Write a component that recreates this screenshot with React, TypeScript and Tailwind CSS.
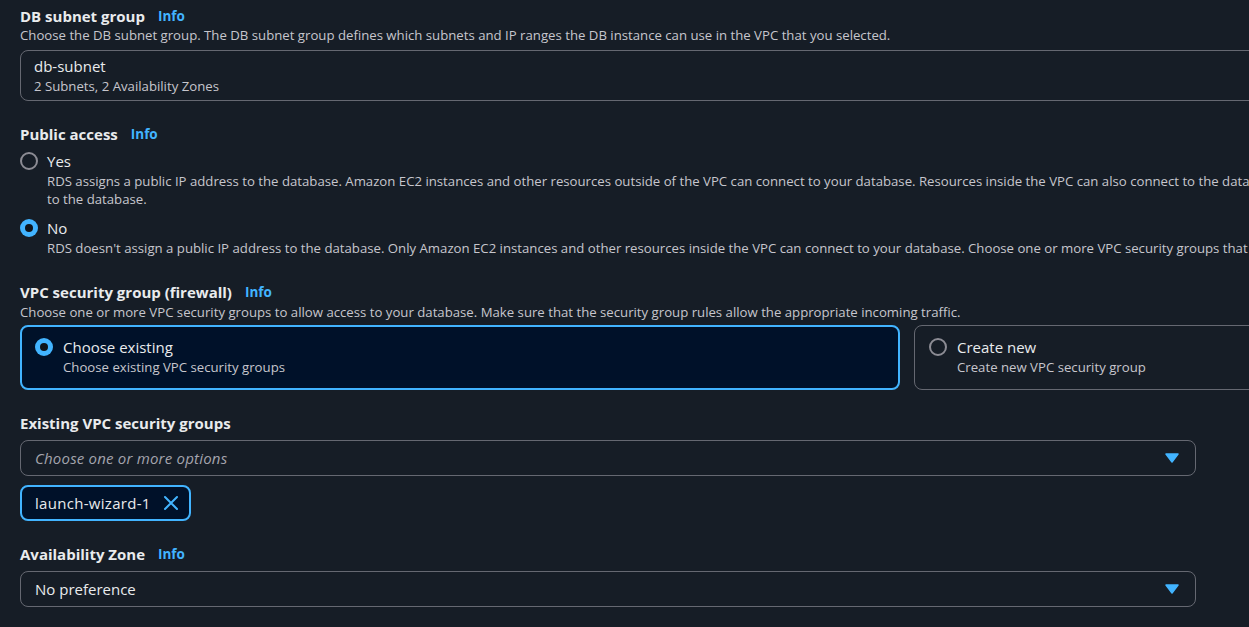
import React from "react";

const font = { fontFamily: '"Open Sans", "Noto Sans", sans-serif' };

function Info() {
  return <span className="ml-[13px] text-[13.5px] font-bold text-[#42b4ff]">Info</span>;
}

function Radio({ checked }: { checked?: boolean }) {
  return checked ? (
    <span className="flex h-[18px] w-[18px] shrink-0 items-center justify-center rounded-full bg-[#42b4ff]">
      <span className="block h-[8px] w-[8px] rounded-full bg-[#0f141a]" />
    </span>
  ) : (
    <span className="block h-[18px] w-[18px] shrink-0 rounded-full border-2 border-[#8c8c94]" />
  );
}

function Caret() {
  return (
    <svg width="14" height="10" viewBox="0 0 14 10">
      <path d="M1 1h12L7 9z" fill="#42b4ff" stroke="#42b4ff" strokeLinejoin="round" strokeWidth="1.5" />
    </svg>
  );
}

export default function App() {
  return (
    <div className="h-[627px] w-[1249px] overflow-hidden bg-[#161d26] text-[#e9ebed]" style={font}>
      <div className="w-[1800px] px-[20px] pt-[6px]">
        {/* DB subnet group */}
        <div className="flex items-center text-[15px] font-bold leading-[20px]">
          DB subnet group <Info />
        </div>
        <p className="text-[13.2px] leading-[18px] text-[#c6c6cd]">
          Choose the DB subnet group. The DB subnet group defines which subnets and IP ranges the DB instance can use in the VPC that you selected.
        </p>
        <div className="mt-[6px] flex h-[51px] flex-col justify-center rounded-[8px] border border-[#656871] px-[13px]">
          <div className="text-[15px] leading-[21px]">db-subnet</div>
          <div className="text-[13.2px] leading-[18px] text-[#c6c6cd]">2 Subnets, 2 Availability Zones</div>
        </div>

        {/* Public access */}
        <div className="mt-[23px] flex items-center text-[15px] font-bold leading-[20px]">
          Public access <Info />
        </div>
        <div className="mt-[7px] flex gap-[9px]">
          <div className="pt-[1px]">
            <Radio />
          </div>
          <div>
            <div className="text-[15px] leading-[21px]">Yes</div>
            <p className="whitespace-nowrap text-[13.2px] leading-[18px] text-[#c6c6cd]">
              RDS assigns a public IP address to the database. Amazon EC2 instances and other resources outside of the VPC can connect to your database. Resources inside the VPC can also connect to the database. Choose one or more VPC security groups that specify which resources can connect
              <br />
              to the database.
            </p>
          </div>
        </div>
        <div className="mt-[10px] flex gap-[9px]">
          <div className="pt-[1px]">
            <Radio checked />
          </div>
          <div>
            <div className="text-[15px] leading-[21px]">No</div>
            <p className="whitespace-nowrap text-[13.2px] leading-[18px] text-[#c6c6cd]">
              RDS doesn't assign a public IP address to the database. Only Amazon EC2 instances and other resources inside the VPC can connect to your database. Choose one or more VPC security groups that specify which resources can connect to the database.
            </p>
          </div>
        </div>

        {/* VPC security group */}
        <div className="mt-[25px] flex items-center text-[15px] font-bold leading-[20px]">
          VPC security group (firewall) <Info />
        </div>
        <p className="mt-[1px] text-[13.2px] leading-[18px] text-[#c6c6cd]">
          Choose one or more VPC security groups to allow access to your database. Make sure that the security group rules allow the appropriate incoming traffic.
        </p>
        <div className="mt-[4px] grid grid-cols-[880px_880px] gap-[14px]">
          <div className="flex h-[65px] gap-[10px] rounded-[8px] border-2 border-[#42b4ff] bg-[#001129] px-[13px] pt-[10px]">
            <div className="pt-[1px]">
              <Radio checked />
            </div>
            <div>
              <div className="text-[15px] leading-[20px]">Choose existing</div>
              <div className="text-[13.2px] leading-[20px] text-[#c6c6cd]">Choose existing VPC security groups</div>
            </div>
          </div>
          <div className="flex h-[65px] gap-[10px] rounded-[8px] border border-[#656871] px-[14px] pt-[11px]">
            <div className="pt-[1px]">
              <Radio />
            </div>
            <div>
              <div className="text-[15px] leading-[20px]">Create new</div>
              <div className="text-[13.2px] leading-[20px] text-[#c6c6cd]">Create new VPC security group</div>
            </div>
          </div>
        </div>

        {/* Existing VPC security groups */}
        <div className="mt-[23px] text-[15px] font-bold leading-[20px]">Existing VPC security groups</div>
        <div className="mt-[7px] flex h-[36px] w-[1176px] items-center justify-between rounded-[8px] border border-[#656871] pl-[14px] pr-[16px]">
          <span className="text-[15px] italic tracking-[0.2px] text-[#a4a4ad]">Choose one or more options</span>
          <Caret />
        </div>
        <div className="mt-[9px] flex h-[36px] w-fit items-center gap-[12px] rounded-[8px] border-2 border-[#42b4ff] bg-[#001129] pl-[13px] pr-[10px]">
          <span className="text-[15px] tracking-[0.3px]">launch-wizard-1</span>
          <svg width="16" height="16" viewBox="0 0 16 16">
            <path d="M2 2l12 12M14 2L2 14" stroke="#42b4ff" strokeWidth="2" strokeLinecap="round" />
          </svg>
        </div>

        {/* Availability Zone */}
        <div className="mt-[23px] flex items-center text-[15px] font-bold leading-[20px]">
          Availability Zone <Info />
        </div>
        <div className="mt-[7px] flex h-[36px] w-[1176px] items-center justify-between rounded-[8px] border border-[#656871] pl-[14px] pr-[16px]">
          <span className="text-[15px]">No preference</span>
          <Caret />
        </div>
      </div>
    </div>
  );
}
